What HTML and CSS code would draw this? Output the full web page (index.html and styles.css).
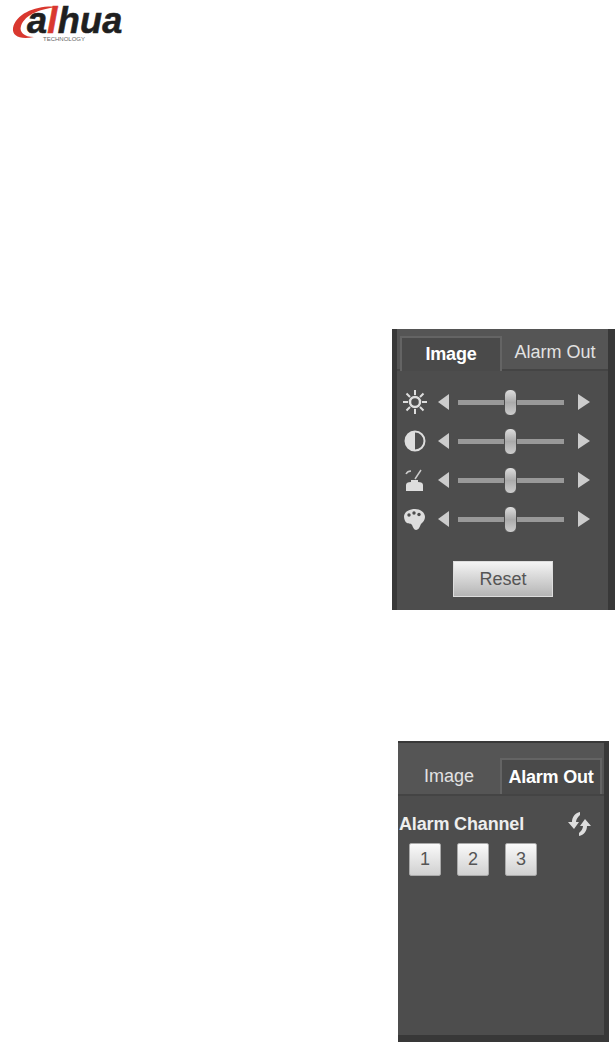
FILE: index.html
```html
<!DOCTYPE html>
<html lang="en">
<head>
    <meta charset="UTF-8">
    <title>Image and Alarm Out</title>
    <link rel="stylesheet" href="styles.css">
</head>
<body>
    <!-- Logo -->
    <div class="logo">
        <svg class="logo-swoosh" width="60" height="40" viewBox="0 0 60 40">
            <path d="M50 3C30 0 6 8 3 24 2 32 10 36 24 33 14 33 9 28 11 22 15 10 32 4 50 3Z" fill="#d9382f"/>
        </svg>
        <div class="logo-name">a<span class="logo-l">l</span>hua</div>
        <div class="logo-sub">TECHNOLOGY</div>
    </div>

    <!-- Panel gambar -->
    <div class="panel panel-image">
        <div class="tabs">
            <div class="tab tab-on">Image</div>
            <div class="tab">Alarm Out</div>
        </div>
        <div class="sliders">
            <div class="slider-row">
                <svg class="row-icon" width="26" height="26" viewBox="0 0 26 26">
                    <circle cx="13" cy="13" r="5" fill="none" stroke="#ddd" stroke-width="2.500"/>
                    <path d="M13 1v5M13 20v5M1 13h5M20 13h5M4.500 4.500l3.500 3.500M18 18l3.500 3.500M21.500 4.500L18 8M8 18l-3.500 3.500" stroke="#ddd" stroke-width="2"/>
                </svg>
                <span class="arrow arrow-left"></span>
                <div class="track"><span class="thumb"></span></div>
                <span class="arrow arrow-right"></span>
            </div>
            <div class="slider-row">
                <svg class="row-icon" width="26" height="26" viewBox="0 0 26 26">
                    <circle cx="13" cy="13" r="9.500" fill="#4d4d4d" stroke="#ddd" stroke-width="2"/>
                    <path d="M13 3.500a9.500 9.500 0 0 0 0 19z" fill="#ddd"/>
                </svg>
                <span class="arrow arrow-left"></span>
                <div class="track"><span class="thumb"></span></div>
                <span class="arrow arrow-right"></span>
            </div>
            <div class="slider-row">
                <svg class="row-icon" width="26" height="26" viewBox="0 0 26 26">
                    <path d="M4 24v-6q0-3 5-3v-2h7v2q5 0 5 3v6z" fill="#ddd"/>
                    <path d="M13 12l6-9M4 7c1-2 3-3 5-3" fill="none" stroke="#ccc" stroke-width="1.500"/>
                </svg>
                <span class="arrow arrow-left"></span>
                <div class="track"><span class="thumb"></span></div>
                <span class="arrow arrow-right"></span>
            </div>
            <div class="slider-row">
                <svg class="row-icon" width="26" height="26" viewBox="0 0 26 26">
                    <path d="M2 10C3 5 8 3 13 3s10 3 10 8c0 3-2 5-4 7-1 2-2 6-5 6-2 0-3-3-4-5-1-2-3-1-5-2s-3-4-3-7z" fill="#ddd"/>
                    <circle cx="7" cy="9" r="1.700" fill="#4d4d4d"/>
                    <circle cx="12" cy="7" r="1.700" fill="#4d4d4d"/>
                    <circle cx="17" cy="8.500" r="1.700" fill="#4d4d4d"/>
                </svg>
                <span class="arrow arrow-left"></span>
                <div class="track"><span class="thumb"></span></div>
                <span class="arrow arrow-right"></span>
            </div>
        </div>
        <button class="btn btn-reset">Reset</button>
    </div>

    <!-- Panel alarm -->
    <div class="panel panel-alarm">
        <div class="tabs">
            <div class="tab">Image</div>
            <div class="tab tab-on">Alarm Out</div>
        </div>
        <div class="alarm-head">
            <span class="alarm-title">Alarm Channel</span>
            <svg class="refresh" width="26" height="26" viewBox="0 0 26 26">
                <path d="M13 1C8 2 5 6 5 11H1l6 7 5-7H9c0-3 2-5 4-7z" fill="#ddd"/>
                <path d="M12 25c5-1 8-5 8-10h4l-6-7-5 7h3c0 3-2 5-4 7z" fill="#ddd"/>
            </svg>
        </div>
        <div class="channels">
            <button class="btn btn-num">1</button>
            <button class="btn btn-num">2</button>
            <button class="btn btn-num">3</button>
        </div>
    </div>
</body>
</html>
```

FILE: styles.css
```css
* {
    margin: 0;
    padding: 0;
    box-sizing: border-box;
}

body {
    background: white;
    font-family: "Liberation Sans", Arial, sans-serif;
    overflow: hidden;
    height: 1042px;
}

/* Logo */
.logo {
    position: relative;
    height: 44px;
    padding: 3px 0 0 27px;
}

.logo-swoosh {
    position: absolute;
    top: 4px;
    left: 10px;
}

.logo-name {
    font-size: 36px;
    line-height: 36px;
    font-weight: bold;
    font-style: italic;
    letter-spacing: 0.3px;
    color: #1f1f1f;
    -webkit-text-stroke: 0.6px #1f1f1f;
}

.logo-l {
    color: #d9382f;
    -webkit-text-stroke-color: #d9382f;
}

.logo-sub {
    font-size: 6px;
    line-height: 6px;
    margin: -3px 0 0 16px;
    color: #666;
}

/* Panel */
.panel {
    background: #4d4d4d;
    color: #ddd;
}

.panel-image {
    width: 223px;
    height: 281px;
    margin: 285px 0 0 392px;
    padding: 0 7px 0 5px;
    box-shadow: inset 5px 0 0 #383838, inset -7px 0 0 #383838;
}

.panel-alarm {
    width: 211px;
    height: 301px;
    margin: 131px 0 0 398px;
    padding: 2px 5px 7px 0;
    box-shadow: inset -5px 0 0 #383838, inset 0 -7px 0 #383838, inset 0 2px 0 #383838;
}

/* Tab */
.tabs {
    display: flex;
    height: 42px;
    padding: 7px 0 0 3px;
    background: #555;
    border-bottom: 2px solid #444;
}

.panel-alarm .tabs {
    height: 53px;
    padding: 15px 2px 0 0;
}

.tab {
    display: flex;
    justify-content: center;
    align-items: center;
    flex: 1;
    font-size: 18px;
    color: #e2e2e2;
}

.tab-on {
    flex: 0 0 102px;
    height: 35px;
    background: #4a4a4a;
    color: white;
    font-weight: bold;
    letter-spacing: -0.2px;
    border: 2px solid #646464;
    border-bottom: 0;
}

.panel-alarm .tab {
    flex: 0 0 102px;
    height: 36px;
}

/* Slider */
.sliders {
    display: flex;
    flex-direction: column;
    gap: 13px;
    padding: 18px 0 0 5px;
}

.slider-row {
    display: flex;
    align-items: center;
    height: 26px;
}

.row-icon {
    flex: none;
    margin-right: 10px;
}

.arrow {
    flex: none;
    width: 0;
    height: 0;
    border-top: 8px solid transparent;
    border-bottom: 8px solid transparent;
}

.arrow-left {
    border-right: 11px solid #ccc;
}

.arrow-right {
    border-left: 12px solid #ccc;
}

.track {
    position: relative;
    width: 106px;
    height: 5px;
    margin: 0 14px 0 9px;
    background: #999;
}

.thumb {
    position: absolute;
    top: -11px;
    left: 46px;
    width: 13px;
    height: 27px;
    border-radius: 6px;
    background: linear-gradient(#ddd, #aaa 50%, #ccc);
    border: 1px solid #4d4d4d;
}

/* Tombol */
.btn {
    font-family: inherit;
    border: 1px solid #ddd;
    color: #555;
    background: linear-gradient(#f4f4f4, #b5b5b5);
}

.btn-reset {
    display: block;
    width: 100px;
    height: 36px;
    margin: 29px 0 0 56px;
    font-size: 18px;
}

.alarm-head {
    display: flex;
    justify-content: space-between;
    align-items: center;
    height: 26px;
    margin-top: 15px;
    padding: 0 11px 0 1px;
}

.alarm-title {
    font-size: 18px;
    font-weight: bold;
    letter-spacing: -0.15px;
    color: #eee;
}

.channels {
    display: flex;
    gap: 16px;
    margin-top: 6px;
    padding-left: 11px;
}

.btn-num {
    width: 32px;
    height: 33px;
    font-size: 18px;
    border-radius: 2px;
    border-color: #aaa;
    background: linear-gradient(#fafafa, #d0d0d0);
}
```
